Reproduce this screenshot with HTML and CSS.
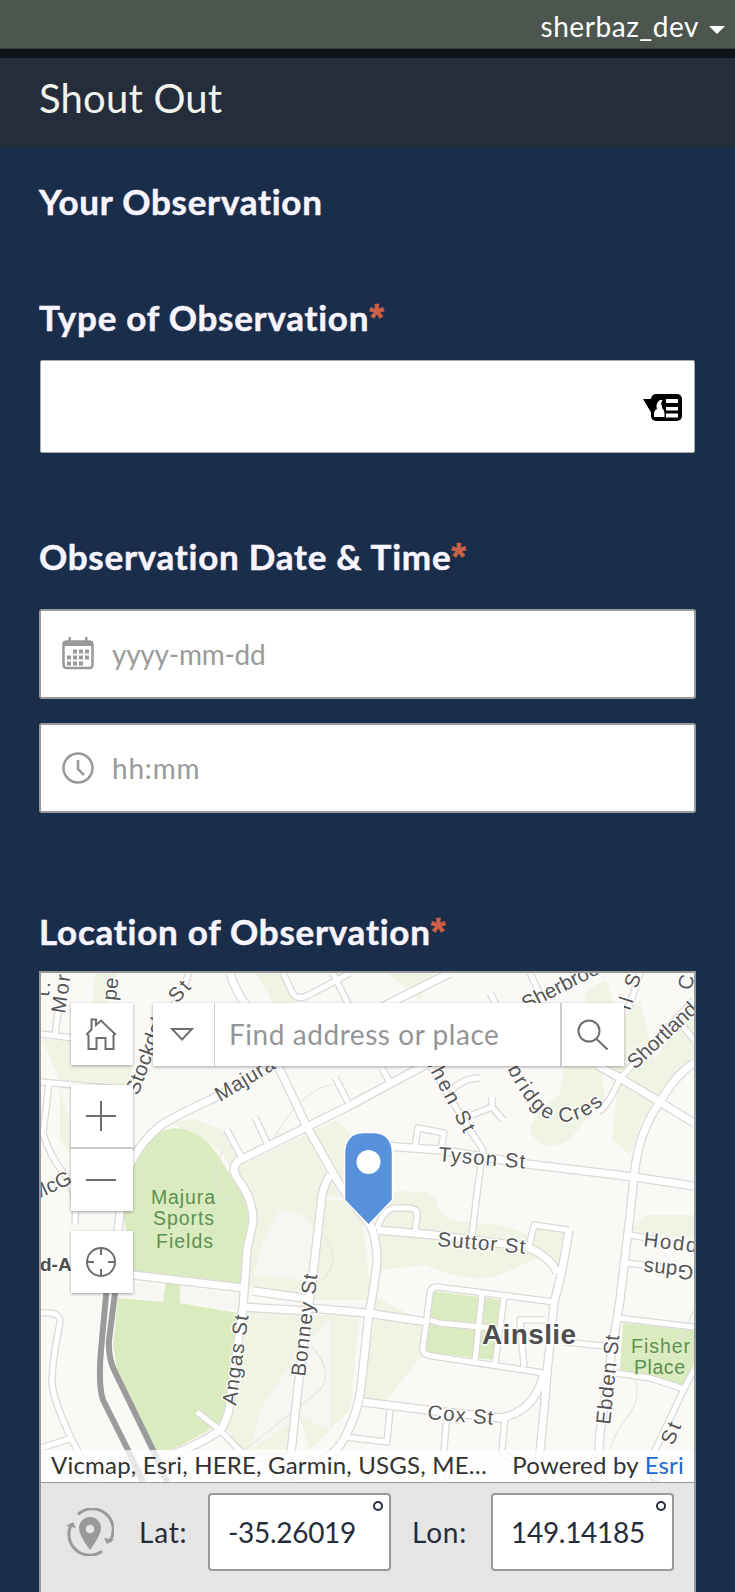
FILE: index.html
```html
<!DOCTYPE html>
<html lang="en">
<head>
<meta charset="utf-8">
<title>Shout Out</title>
<link rel="stylesheet" href="styles.css">
</head>
<body>
<div class="page">
  <nav class="account"><span class="user">sherbaz_dev</span><i class="caret"></i></nav>
  <header class="header"><h1 class="title">Shout Out</h1></header>
  <main class="form">
    <h2 class="label section">Your Observation</h2>

    <h2 class="label type">Type of Observation<b class="req">*</b></h2>
    <div class="select">
      <svg width="40" height="28" viewBox="642 393 40 28">
        <rect x="651" y="394" width="31" height="27" rx="5"/>
        <path class="w" d="M666 399h12v4h-12zM666 407h12v3.500h-12zM666 413.500h12v4h-12zM654 417v-3q0-4 3-5q-2-6 3-9h2.500q-2 3-1 5l1 4q2 1 2 5v3z"/>
        <path d="M643 399h16l-7 15z"/>
      </svg>
    </div>

    <h2 class="label date">Observation Date &amp; Time<b class="req">*</b></h2>
    <div class="field">
      <svg class="icon" width="32" height="34" viewBox="0 0 32 34">
        <rect x="1.500" y="4.500" width="29" height="26.500" rx="3"/>
        <path class="solid" d="M1 4h30v5H1zM6.500 0h2.500v5H6.500zM23 0h2.500v5H23z"/>
        <path class="dots" d="M11 14.500h17M5 20.500h23M5 26.500h17"/>
      </svg>
      <span class="ph-date">yyyy-mm-dd</span>
    </div>
    <div class="field">
      <svg class="icon" width="32" height="32" viewBox="0 0 32 32">
        <circle cx="16" cy="16" r="14.500"/>
        <path d="M16 8v9l6 6"/>
      </svg>
      <span class="ph-time">hh:mm</span>
    </div>

    <h2 class="label loc">Location of Observation<b class="req">*</b></h2>
    <section class="geo">
      <div class="map">
        <svg class="tiles" viewBox="41 973 653 509" width="653" height="509">
          <defs>
            <g id="roads">
              <path d="M118 1232L122 1192Q128 1153 160 1126Q175 1116 210 1100L275 1065L390 1003L450 973"/>
              <path d="M230 973Q234 990 250 1010L280 1070L307 1127L333 1173Q345 1195 368 1222Q377 1235 377 1262Q374 1290 369 1313L361 1387Q358 1412 347 1433Q340 1450 320 1462"/>
              <path d="M440 1057L347 1107L240 1160Q230 1166 237 1178Q254 1200 253 1222L247 1250L243 1307L237 1350L229 1410Q225 1425 220 1430Q200 1445 160 1459"/>
              <path d="M133 1275L243 1288M253 1291L310 1299M243 1307L310 1311M310 1308L367 1313L427 1322"/>
              <path d="M330 1175Q321 1190 321 1205L313 1273L298 1387L288 1482"/>
              <path d="M385 1146L440 1150L527 1164L634 1177L694 1186"/>
              <path d="M694 1063Q675 1075 660 1102Q638 1132 634 1177L630 1215L620 1300L612 1350L600 1433L597 1482"/>
              <path d="M597 1065L620 1078L660 1102L694 1123"/>
              <path d="M377 1230L434 1235L527 1247Q552 1258 557 1273"/>
              <path d="M569 1230Q563 1270 554 1303L547 1373L545 1400L539 1462"/>
              <path d="M363 1402L427 1410L500 1418Q535 1412 544 1373"/>
            </g>
            <g id="lanes">
              <path d="M197 1412L220 1430L247 1458H290M227 1130L242 1158M255 1117L268 1145M335 1077L348 1102M382 1068L389 1081"/>
              <path d="M415 1147L418 1128L444 1133L441 1149"/>
              <path d="M428 1062L470 1130L483 1150Q477 1190 472 1236"/>
              <path d="M452 1090Q463 1078 480 1078M472 1115L492 1107L503 1120M492 1107V1097"/>
              <path d="M598 1112Q609 1105 620 1078L694 1000"/>
              <path d="M529 1247L534 1225L569 1230"/>
              <path d="M377 1229Q383 1209 395 1208L410 1208Q418 1209 417 1216L415 1232"/>
              <path d="M554 1302L438 1287Q430 1287 430 1294L423 1347Q422 1355 432 1356L544 1373M482 1294L475 1361M504 1297L495 1365M524 1367L520 1320H545M430 1320L439 1323L490 1328"/>
              <path d="M565 1342L604 1346M630 1235L660 1240M625 1263L660 1267M618 1318L694 1327M616 1373L650 1378L684 1389L694 1370M684 1389L655 1450L648 1482"/>
              <path d="M390 1410L387 1442L345 1437M447 1415L441 1482M505 1418L502 1450Q502 1461 540 1462"/>
              <path d="M41 1034L80 1039M59 1005L55 1034M41 1082L132 1090M49 1084L43 1133Q50 1157 65 1175Q77 1190 75 1225"/>
              <path d="M41 1313Q61 1311 60 1323Q52 1360 52 1383Q53 1400 72 1440L95 1482M41 1448L72 1438"/>
              <path d="M283 973L293 994Q298 1000 307 996L350 973M333 973L350 1008M530 973L544 1003M490 993L498 1008M188 973Q187 990 150 1040L140 1080M694 1040L679 1021M640 973L628 1010"/>
            </g>
            <path id="fair" d="M494 1040L504 1062Q533 1124 562 1122Q598 1121 622 1078L630 1060"/>
          </defs>
          <rect class="land" x="41" y="973" width="653" height="509"/>
          <g class="pale">
            <path d="M41 1039L133 1045L130 1085L60 1090L70 1120L95 1115L95 1180L60 1140L60 1080ZM95 973H118L105 1010H92ZM255 973H283L300 1000L275 1005Z"/>
            <path d="M170 1122L195 1119L235 1135L242 1165L335 1120L370 1150V1222L360 1200L322 1195L310 1300L247 1285L252 1200L220 1150ZM360 1200L372 1300L310 1300L322 1200ZM247 1310L305 1312L290 1465L240 1450L225 1425ZM310 1315H360L350 1410L310 1450L294 1400Z"/>
            <path d="M377 1205L400 1190Q430 1195 450 1220L500 1225Q540 1235 545 1255L500 1275Q470 1285 425 1265L378 1270ZM372 1295L425 1322V1352L395 1390L385 1402H363ZM535 1228H567L558 1270L530 1245ZM405 1200Q425 1180 440 1205Z"/>
            <path d="M530 1130Q535 1110 560 1095L565 1060H600L605 1095L570 1140Q540 1155 530 1130ZM585 992L606 980L620 1020L640 1000L655 1060L694 1000V1062L672 1085L642 1120L630 1155L612 1140L618 1085L590 1060ZM388 973H435L420 1000ZM630 1230L645 1215H694V1240Z"/>
          </g>
          <path class="pale2" d="M137 1283L163 1286V1301L128 1297ZM180 1287L240 1295V1310L180 1302ZM264 1240L280 1210Q310 1210 314 1235L308 1280L253 1275ZM260 1410L300 1350L330 1320V1430L300 1415L250 1450Z"/>
          <g class="park">
            <path d="M123 1213L135 1157Q150 1130 175 1128Q205 1130 222 1162L248 1202L252 1222L243 1284L133 1272Z"/>
            <path d="M118 1298L163 1302L166 1280H180V1303L238 1313L230 1405Q225 1427 170 1450H155L117 1370L113 1345Z"/>
            <path d="M432 1291L504 1300L495 1360L425 1352ZM623 1323L694 1330V1365L682 1385L620 1370Z"/>
          </g>
          <path class="contour" d="M222 1150Q210 1190 230 1200M270 1145Q300 1090 330 1085M325 1235Q345 1270 313 1285M310 1345Q335 1370 320 1390L245 1450M635 1380Q642 1400 625 1420Q605 1445 608 1482M694 1310L670 1360"/>
          <g class="casing"><use href="#roads" stroke-width="9.500"/><use href="#lanes" stroke-width="7.500"/></g>
          <g class="white"><use href="#roads" stroke-width="7"/><use href="#lanes" stroke-width="5"/></g>
          <path class="rail" d="M107 1285L101 1350Q98 1385 103 1400L128 1450L143 1482M116 1285L109 1340Q108 1358 115 1372L153 1450L167 1482"/>
          <g class="names">
            <text transform="translate(438 1161) rotate(5)" textLength="87">Tyson St</text>
            <text transform="translate(437 1246) rotate(5)" textLength="88">Suttor St</text>
            <text transform="translate(427 1419) rotate(5)" textLength="66">Cox St</text>
            <text transform="translate(643 1246) rotate(7)" textLength="54">Hodd</text>
            <text transform="translate(694 1266) rotate(186)" textLength="50">Gdns</text>
            <text transform="translate(236 1406) rotate(-82)" textLength="91">Angas St</text>
            <text transform="translate(305 1377) rotate(-83)" textLength="103">Bonney St</text>
            <text transform="translate(610 1425) rotate(-84)" textLength="90">Ebden St</text>
            <text transform="translate(220 1102) rotate(-31)" textLength="66">Majura</text>
            <text transform="translate(138 1096) rotate(-70)" textLength="80">Stockdal</text>
            <text transform="translate(177 1004) rotate(-48)" textLength="22">St</text>
            <text transform="translate(116 1001) rotate(-84)" textLength="23">pe</text>
            <text transform="translate(65 1014) rotate(-82)" textLength="39">Mor</text>
            <text transform="translate(49 997) rotate(-85)" textLength="15">t.</text>
            <text transform="translate(34 1201) rotate(-25)">McG</text>
            <text transform="translate(424 1059) rotate(62)" textLength="85">phen St</text>
            <text transform="translate(526 1011) rotate(-27)" textLength="84">Sherbroo</text>
            <text transform="translate(630 1011) rotate(-72)" textLength="45">ll St</text>
            <text transform="translate(635 1070) rotate(-43)" textLength="87">Shortland</text>
            <text transform="translate(691 991) rotate(-76)">C</text>
            <text transform="translate(673 1446) rotate(-67)" textLength="22">St</text>
            <text class="soft" transform="translate(658 1485) rotate(-67)">ey</text>
            <text letter-spacing="2.100"><textPath href="#fair" startOffset="16">irbridge Cres</textPath></text>
            <text class="bold small" x="40" y="1271">d-A</text>
            <text class="bold" x="482" y="1344" textLength="94">Ainslie</text>
            <g class="green">
              <text x="151" y="1204" textLength="64">Majura</text>
              <text x="153" y="1225" textLength="61">Sports</text>
              <text x="156" y="1248" textLength="57">Fields</text>
              <text x="631" y="1353" textLength="59">Fisher</text>
              <text x="634" y="1374" textLength="51">Place</text>
            </g>
          </g>
          <path class="pin" d="M344.500 1153Q345 1133 363 1132.500H374Q392 1133 392.500 1153V1200L368.500 1225L344.500 1200Z"/>
          <circle cx="368.500" cy="1162" r="12" fill="#fff"/>
        </svg>
        <div class="tools">
          <button class="tool"><svg viewBox="0 0 32 34" width="32" height="34"><path d="M2 17L6.500 12.500V2.500H11V8L16 3.500L30 17L28.500 18.500V32H20.500V21H11.500V32H3.500V18.500Z"/></svg></button>
          <div class="zoom">
            <button class="tool"><svg viewBox="0 0 30 30" width="30" height="30"><path d="M0 15H30M15 0V30"/></svg></button>
            <button class="tool"><svg viewBox="0 0 30 30" width="30" height="30"><path d="M0 15H30"/></svg></button>
          </div>
          <button class="tool"><svg viewBox="0 0 30 30" width="30" height="30"><circle cx="15" cy="15" r="14"/><path d="M15 1V8M15 22V29M1 15H8M22 15H29"/></svg></button>
        </div>
        <div class="search">
          <span class="cell menu"><svg viewBox="0 0 24 16" width="24" height="16"><path d="M2 2H22L12 12.500Z"/></svg></span>
          <span class="cell query">Find address or place</span>
          <span class="cell go"><svg viewBox="0 0 32 32" width="32" height="32"><circle cx="12" cy="12" r="10.500"/><path d="M19 19.500L30.500 30.500"/></svg></span>
        </div>
        <div class="credit"><span>Vicmap, Esri, HERE, Garmin, USGS, ME…</span><span>Powered by <a>Esri</a></span></div>
      </div>
      <div class="coords">
        <svg class="reset" width="48" height="48" viewBox="66 1508 48 48">
          <path class="arc" d="M79 1513.500A21 21 0 0 1 110 1541M101 1552A21 21 0 0 1 71 1525"/>
          <path class="fill" d="M104 1538L114 1540L107 1544ZM66 1526L73 1522L76 1528ZM90 1550Q79 1535 79 1528A11 11 0 0 1 101 1528Q101 1535 90 1550Z"/>
          <circle cx="90" cy="1529" r="4.300" fill="#e5e5e5"/>
        </svg>
        <span class="axis lat">Lat:</span>
        <span class="num">-35.26019<i class="deg"></i></span>
        <span class="axis lon">Lon:</span>
        <span class="num">149.14185<i class="deg"></i></span>
      </div>
    </section>
  </main>
</div>
</body>
</html>
```
FILE: styles.css
```css
* { box-sizing: border-box; }
body { margin: 0; background: #1a2d4b; font-family: Lato, "Liberation Sans", sans-serif; font-variant-ligatures: none; }
.page { width: 735px; height: 1592px; overflow: hidden; display: flex; flex-direction: column; }
.account { flex: none; height: 49px; background: #4c564e; border-bottom: 1px solid #39413d; display: flex; justify-content: flex-end; align-items: center; padding: 3px 10px 0 0; color: #fff; font-size: 28px; letter-spacing: .55px; }
.caret { margin-left: 10px; margin-top: 9px; border: 8px solid transparent; border-top-color: #fff; border-bottom: 0; }
.header { flex: none; height: 98px; background: #252d3b; border-top: 9px solid #0f1219; padding: 15px 0 0 39px; color: #f1f4ee; }
.title { margin: 0; font-size: 40px; line-height: 50px; font-weight: 400; letter-spacing: .2px; }
.form { flex: none; display: flex; flex-direction: column; padding: 32px 39px 0; }
.label { margin: 0; height: 44px; line-height: 45px; font-size: 35px; font-weight: 700; letter-spacing: .75px; color: #f8f5ff; white-space: nowrap; -webkit-text-stroke: .5px currentColor; }
.req { color: #cb6144; font-family: "Liberation Sans", Arial, sans-serif; font-size: 38px; line-height: 0; }
.type { margin-top: 72px; }
.select { height: 93px; margin: 21px 1px 0; background: #fff; border: 1px solid #aaa; border-radius: 2px; display: flex; align-items: center; justify-content: flex-end; padding: 0 12px 0 0; }
.select .w { fill: #fff; }
.date { margin-top: 81px; }
.field { height: 90px; background: #fff; border: 2px solid #999; border-radius: 3px; display: flex; align-items: center; padding-left: 21px; color: #9a9a9a; font-size: 28px; margin-bottom: 24px; }
.date + .field { margin-top: 31px; }
.ph-date { letter-spacing: -.25px; }
.ph-time { letter-spacing: .8px; }
.icon { margin-right: 18px; fill: none; stroke: #999; stroke-width: 2.5; }
.icon .solid { fill: #999; stroke: none; }
.icon .dots { stroke-width: 4; stroke-dasharray: 4 2; }
.loc { margin-top: 72px; }
.geo { border: 2px solid #999; margin-top: 18px; height: 640px; background: #e5e5e5; }
.map { position: relative; height: 510px; border-bottom: 1px solid #999; overflow: hidden; }
.tiles { display: block; }
.land { fill: #faf9f6; }
.pale { fill: #f0f4e5; }
.pale2 { fill: #f7f6f2; }
.park { fill: #dbebc0; }
.contour { fill: none; stroke: #e7e5dc; stroke-width: 1.2; }
.casing, .white, .rail { fill: none; stroke: #dad9d6; stroke-linejoin: round; }
.white { stroke: #fff; }
.rail { stroke: #9b9b9b; stroke-width: 6; }
.names { font: 20.5px "Liberation Sans", Arial, sans-serif; fill: #555; stroke: #fff; stroke-width: 3; stroke-opacity: .75; paint-order: stroke; stroke-linejoin: round; }
.names .bold { font-size: 28px; font-weight: 700; fill: #4e4e4e; }
.names .small { font-size: 19px; }
.names .soft { opacity: .35; }
.green { fill: #5b9150; font-size: 19.5px; stroke: #dbebc0; }
.pin { fill: #5891db; stroke: #fff; stroke-width: 1.5; }
.tools { position: absolute; left: 30px; top: 30px; display: flex; flex-direction: column; gap: 20px; }
.zoom { display: flex; flex-direction: column; gap: 2px; background: #ccc; }
.tool { width: 62px; height: 62px; padding: 0 2px 0 0; border: 0; background: #fff; display: flex; align-items: center; justify-content: center; box-shadow: 0 1px 3px rgba(0,0,0,.35); }
.zoom .tool { box-shadow: none; }
.zoom { box-shadow: 0 1px 3px rgba(0,0,0,.35); }
.tool svg, .cell svg { fill: none; stroke: #6e6e6e; stroke-width: 2; }
.search { position: absolute; left: 112px; top: 30px; width: 471px; height: 63px; display: flex; background: #fff; box-shadow: 0 1px 3px rgba(0,0,0,.35); }
.cell { display: flex; align-items: center; justify-content: center; }
.menu { width: 61px; padding-right: 3px; }
.query { width: 348px; border: solid #ccc; border-width: 0 2px 0 1px; justify-content: flex-start; padding-left: 14px; padding-bottom: 2px; color: #959595; font-size: 28px; letter-spacing: .55px; }
.go { width: 62px; }
.credit { position: absolute; left: 0; right: 0; bottom: 0; height: 32px; line-height: 30px; padding: 0 10px; display: flex; justify-content: space-between; background: rgba(255,255,255,.75); color: #323232; font-size: 24px; letter-spacing: .2px; white-space: nowrap; }
.credit a { color: #2467cb; }
.coords { display: flex; align-items: center; height: 98px; padding-left: 25px; color: #252d3b; font-size: 28px; }
.axis { white-space: nowrap; letter-spacing: .8px; }
.lat { width: 69px; margin-left: 25px; }
.lon { width: 79px; margin-left: 21px; }
.num { position: relative; width: 183px; height: 78px; background: #fff; border: 2px solid #999; border-radius: 4px; display: flex; align-items: center; padding-left: 18px; letter-spacing: -.3px; }
.deg { position: absolute; right: 6px; top: 6px; width: 10px; height: 10px; border: 2px solid #252d3b; border-radius: 50%; }
.reset .arc { fill: none; stroke: #999; stroke-width: 3; stroke-linecap: round; }
.reset .fill { fill: #999; }
```
